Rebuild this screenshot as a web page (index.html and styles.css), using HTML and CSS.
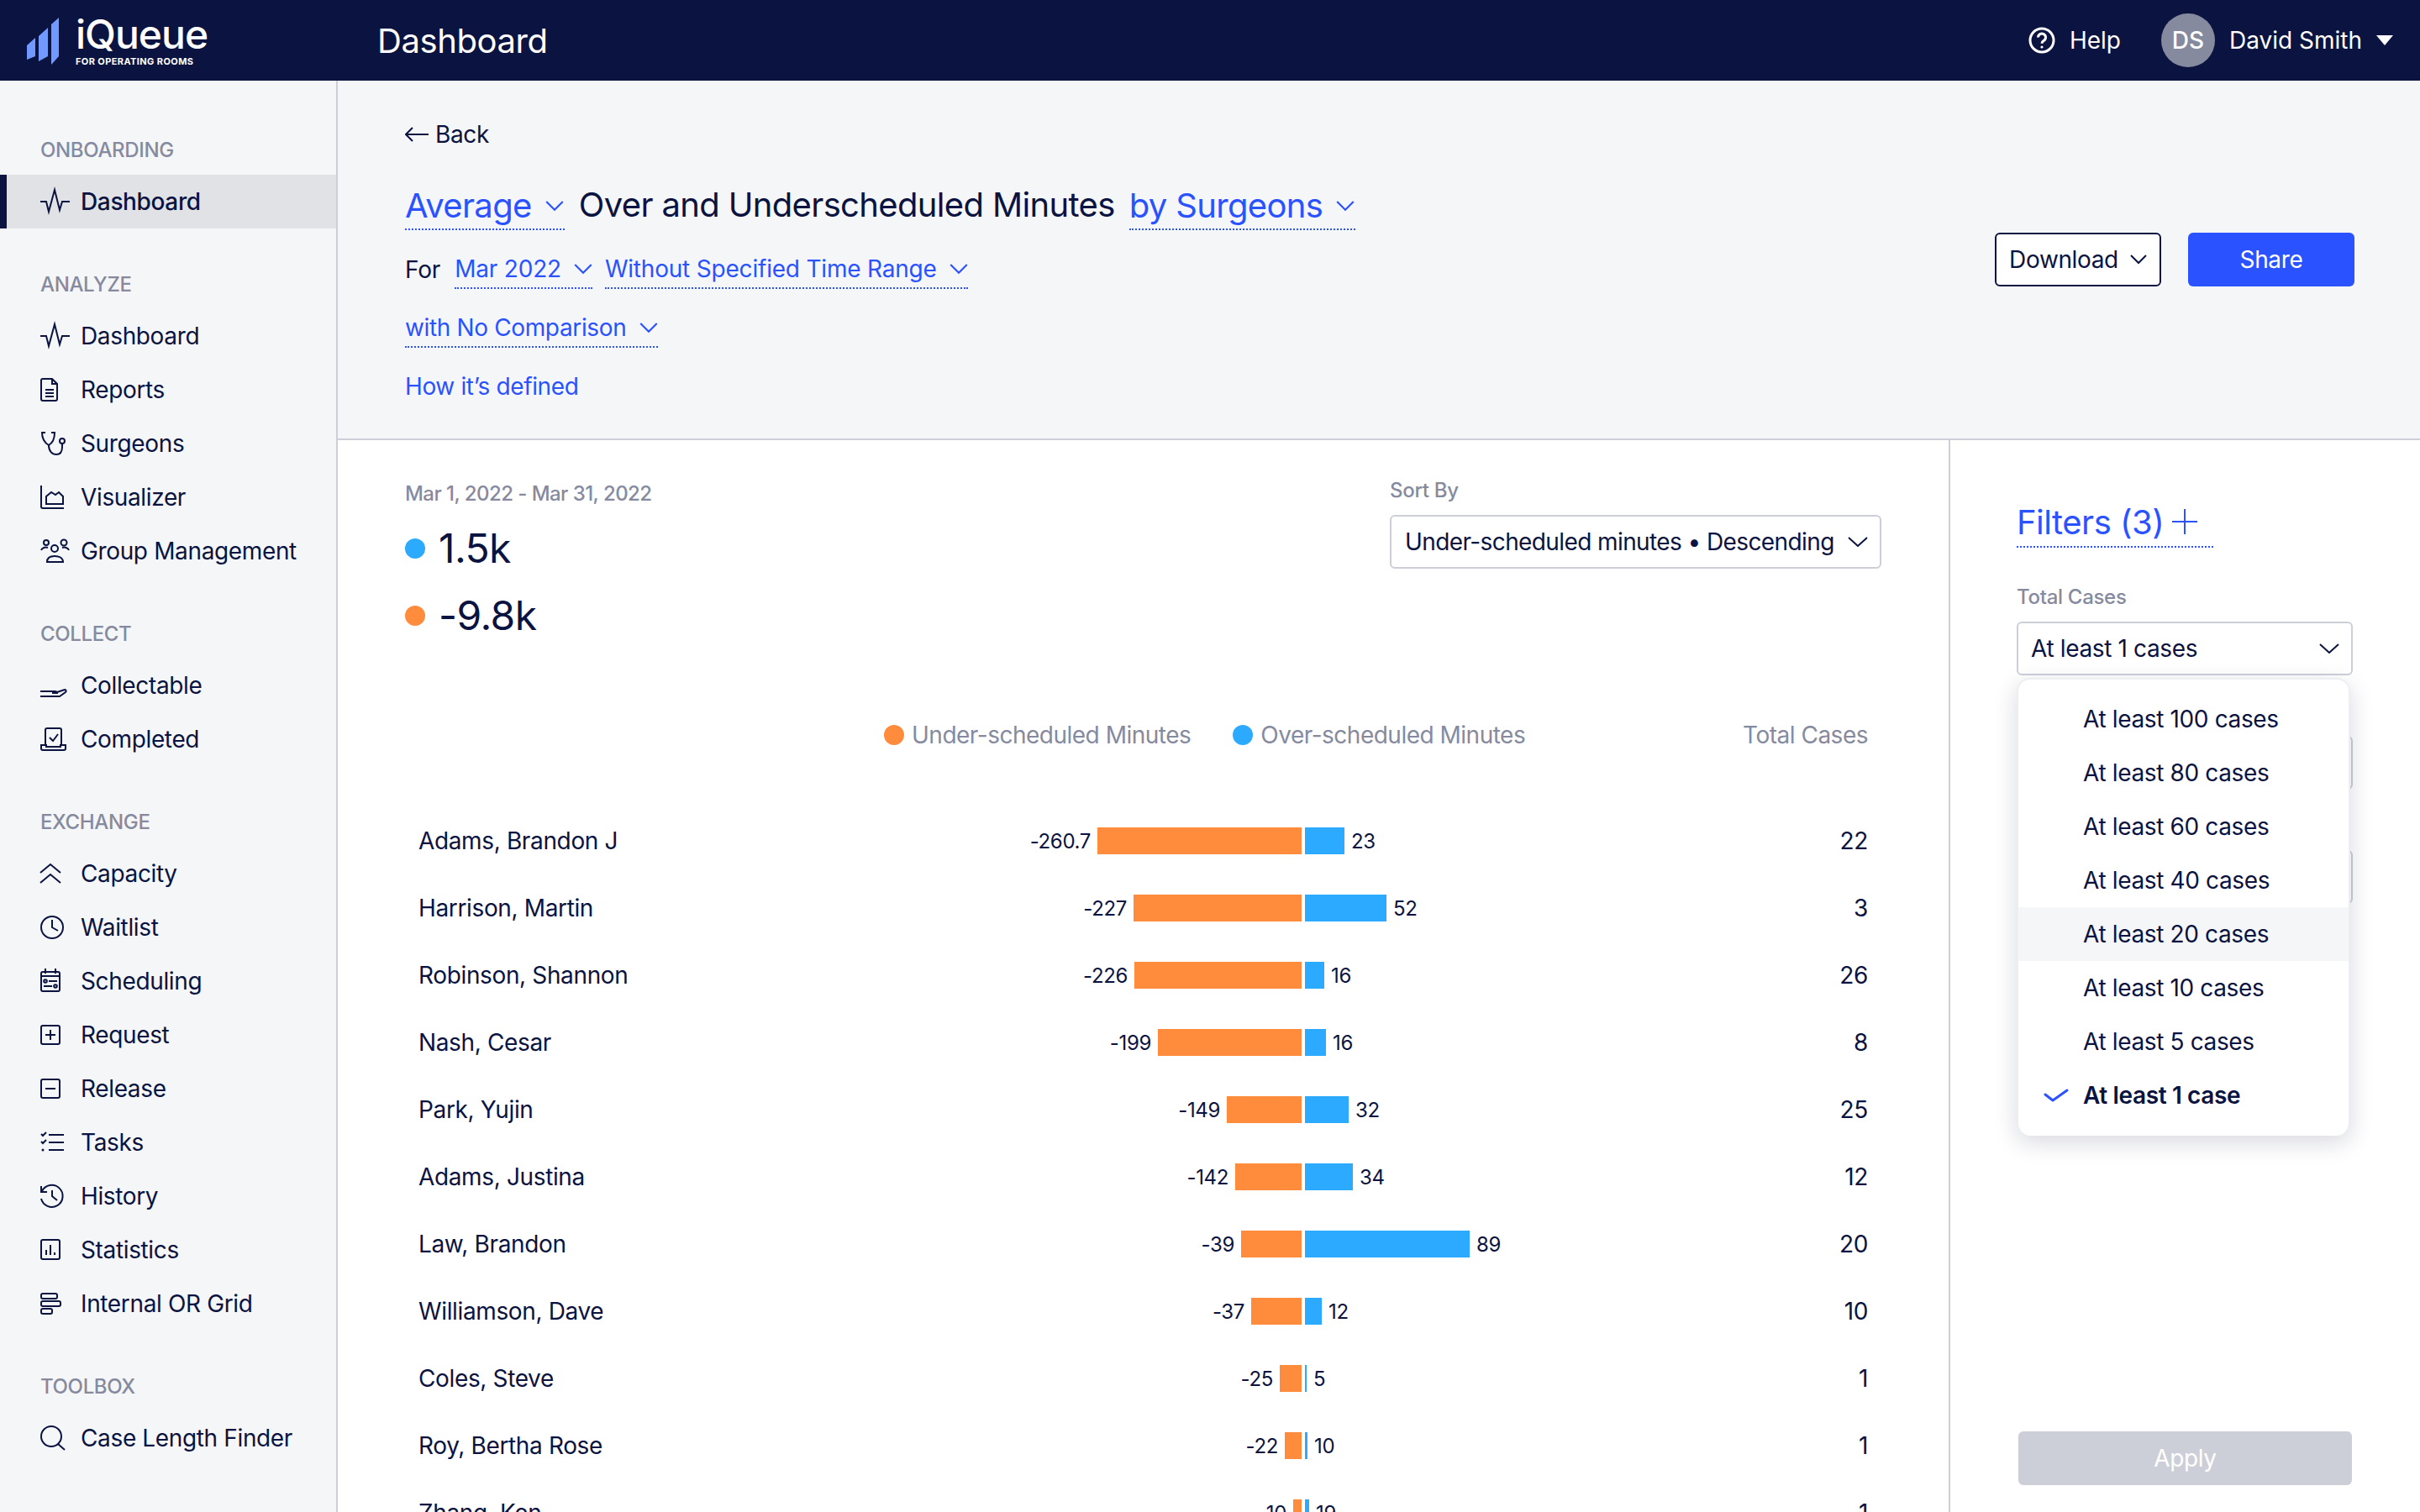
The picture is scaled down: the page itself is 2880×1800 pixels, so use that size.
FILE: index.html
```html
<!DOCTYPE html>
<html lang="en">
<head>
  <meta charset="UTF-8" />
  <title>iQueue Dashboard</title>
  <link rel="stylesheet" href="styles.css">
</head>
<body>

<header class="topbar">
  <div class="brand">
    <svg class="brand-mark" viewBox="0 0 38 56"><path d="M0 33l10-9v22l-10 4z" /><path d="M14 22l11-10v34l-11 6z" /><path d="M29 8l9-8v46l-9 10z" /></svg>
    <div class="brand-text">
      <div class="brand-name">iQueue</div>
      <div class="brand-sub">FOR OPERATING ROOMS</div>
    </div>
  </div>
  <div class="topbar-title">Dashboard</div>
  <div class="help">
    <svg class="help-icon" viewBox="0 0 32 32"><circle cx="16" cy="16" r="14" /><path d="M11.5 12.5a4.5 4.5 0 1 1 6.8 3.9c-1.5.9-2.3 1.6-2.3 3.3" /><circle class="dot" cx="16" cy="24" r="1.6" /></svg>
    <span>Help</span>
  </div>
  <div class="avatar">DS</div>
  <div class="username">David Smith</div>
  <div class="caret"></div>
</header>

<div class="layout">
  <aside class="sidebar">
    <div class="nav-label">ONBOARDING</div>
    <a class="nav-item active">
      <svg class="nav-icon" viewBox="0 0 40 40"><path d="M0 20h7l3 12 7-26 6 24 3-10h9" /></svg>
      <span>Dashboard</span>
    </a>

    <div class="nav-label">ANALYZE</div>
    <a class="nav-item">
      <svg class="nav-icon" viewBox="0 0 40 40"><path d="M0 20h7l3 12 7-26 6 24 3-10h9" /></svg>
      <span>Dashboard</span>
    </a>
    <a class="nav-item">
      <svg class="nav-icon" viewBox="0 0 40 40"><path d="M3 7h11l6 6v18a2 2 0 0 1-2 2H3a2 2 0 0 1-2-2V9a2 2 0 0 1 2-2z" /><path d="M14 7v6h6M6 20h10M6 24h10M6 28h10" /></svg>
      <span>Reports</span>
    </a>
    <a class="nav-item">
      <svg class="nav-icon" viewBox="0 0 40 40"><path d="M6 7H2c0 8 3 12 8 15 5-3 7-7 7-15h-4" /><path d="M10 22c0 7 4 11 9 11s7-4 7-9v-4" /><circle cx="26" cy="17" r="3" /></svg>
      <span>Surgeons</span>
    </a>
    <a class="nav-item">
      <svg class="nav-icon" viewBox="0 0 40 40"><path d="M1 6v25a2 2 0 0 0 2 2h25" /><path d="M7 28v-9l6-5 5 3 4-3 5 5v9z" /></svg>
      <span>Visualizer</span>
    </a>
    <a class="nav-item">
      <svg class="nav-icon" viewBox="0 0 40 40"><circle cx="7" cy="10" r="3" /><circle cx="28" cy="10" r="3.5" /><circle cx="17" cy="17" r="4" /><path d="M1 19c1-3 5-4 8-3M34 19c-1-3-5-4-8-3M8 33c0-5 4-7 9-7s10 2 10 7z" /></svg>
      <span>Group Management</span>
    </a>

    <div class="nav-label">COLLECT</div>
    <a class="nav-item">
      <svg class="nav-icon" viewBox="0 0 40 40"><path d="M0 27h17c2 0 3 1 3 2h-6M20 28l9-3c2 0 2 2 1 3l-7 5H0" /></svg>
      <span>Collectable</span>
    </a>
    <a class="nav-item">
      <svg class="nav-icon" viewBox="0 0 40 40"><path d="M6 27V9a2 2 0 0 1 2-2h15a2 2 0 0 1 2 2v18" /><path d="M1 27h6v2h17v-2h6v4a2 2 0 0 1-2 2H3a2 2 0 0 1-2-2z" /><path d="M11 18l4 4 6-8" /></svg>
      <span>Completed</span>
    </a>

    <div class="nav-label">EXCHANGE</div>
    <a class="nav-item">
      <svg class="nav-icon" viewBox="0 0 40 40"><path d="M0 19L12 9l12 10M0 31l12-10 12 10" /></svg>
      <span>Capacity</span>
    </a>
    <a class="nav-item">
      <svg class="nav-icon" viewBox="0 0 40 40"><circle cx="14" cy="20" r="13" /><path d="M14 11v9l7 4" /></svg>
      <span>Waitlist</span>
    </a>
    <a class="nav-item">
      <svg class="nav-icon" viewBox="0 0 40 40"><rect x="1" y="9" width="22" height="23" rx="2" /><path d="M6 5v6M18 5v6M1 14h22M10 20h10M4 26h10" /><circle cx="6" cy="20" r="1.8" /><circle cx="18" cy="26" r="1.8" /></svg>
      <span>Scheduling</span>
    </a>
    <a class="nav-item">
      <svg class="nav-icon" viewBox="0 0 40 40"><rect x="1" y="9" width="22" height="22" rx="2" /><path d="M12 14v12M6 20h12" /></svg>
      <span>Request</span>
    </a>
    <a class="nav-item">
      <svg class="nav-icon" viewBox="0 0 40 40"><rect x="1" y="9" width="22" height="22" rx="2" /><path d="M6 20h12" /></svg>
      <span>Release</span>
    </a>
    <a class="nav-item">
      <svg class="nav-icon" viewBox="0 0 40 40"><path d="M10 11h18M10 20h18M10 29h18M1 10l2 2 4-4M1 19l2 2 4-4" /><circle class="dot" cx="3" cy="29" r="1.5" /></svg>
      <span>Tasks</span>
    </a>
    <a class="nav-item">
      <svg class="nav-icon" viewBox="0 0 40 40"><path d="M2 14a13 13 0 1 1-1 9" /><path d="M1 8v7h7M14 13v7l6 5" /></svg>
      <span>History</span>
    </a>
    <a class="nav-item">
      <svg class="nav-icon" viewBox="0 0 40 40"><rect x="1" y="8" width="22" height="23" rx="2" /><path d="M7 26v-6M12 26V14M17 26v-3" /></svg>
      <span>Statistics</span>
    </a>
    <a class="nav-item">
      <svg class="nav-icon" viewBox="0 0 40 40"><rect x="1" y="8" width="19" height="6" rx="2" /><rect x="1" y="17" width="23" height="6" rx="2" /><rect x="1" y="26" width="13" height="6" rx="2" /></svg>
      <span>Internal OR Grid</span>
    </a>

    <div class="nav-label">TOOLBOX</div>
    <a class="nav-item">
      <svg class="nav-icon" viewBox="0 0 40 40"><circle cx="13" cy="18" r="12" /><path d="M21 27l8 7" /></svg>
      <span>Case Length Finder</span>
    </a>
  </aside>

  <main class="main">
    <section class="summary">
      <div class="summary-left">
        <div class="back">
          <svg class="back-arrow" viewBox="0 0 28 20"><path d="M9 2L1 10l8 8M1 10h27" /></svg>
          <span>Back</span>
        </div>
        <div class="title-row">
          <span class="pick">Average <svg class="chev" viewBox="0 0 20 12"><path d="M1 1l9 9 9-9" /></svg></span>
          <span class="title-text">Over and Underscheduled Minutes</span>
          <span class="pick">by Surgeons <svg class="chev" viewBox="0 0 20 12"><path d="M1 1l9 9 9-9" /></svg></span>
        </div>
        <div class="for-row">
          <span class="for-label">For</span>
          <span class="pick">Mar 2022 <svg class="chev" viewBox="0 0 20 12"><path d="M1 1l9 9 9-9" /></svg></span>
          <span class="pick">Without Specified Time Range <svg class="chev" viewBox="0 0 20 12"><path d="M1 1l9 9 9-9" /></svg></span>
        </div>
        <div class="compare-row">
          <span class="pick">with No Comparison <svg class="chev" viewBox="0 0 20 12"><path d="M1 1l9 9 9-9" /></svg></span>
        </div>
        <div class="defined">How it’s defined</div>
      </div>
      <div class="summary-actions">
        <button class="btn-download">Download <svg class="chev" viewBox="0 0 20 12"><path d="M1 1l9 9 9-9" /></svg></button>
        <button class="btn-share">Share</button>
      </div>
    </section>

    <div class="content">
      <section class="chart">
        <div class="chart-head">
          <div>
            <div class="date-range">Mar 1, 2022 - Mar 31, 2022</div>
            <div class="big-stat"><i class="dot-blue"></i>1.5k</div>
            <div class="big-stat"><i class="dot-orange"></i>-9.8k</div>
          </div>
          <div class="sort">
            <div class="field-label">Sort By</div>
            <div class="select sort-select">Under-scheduled minutes • Descending <svg class="chev" viewBox="0 0 24 12"><path d="M1 1l11 10L23 1" /></svg></div>
          </div>
        </div>

        <div class="legend">
          <span class="legend-item under"><i class="dot-orange"></i>Under-scheduled Minutes</span>
          <span class="legend-item over"><i class="dot-blue"></i>Over-scheduled Minutes</span>
          <span class="legend-total">Total Cases</span>
        </div>

        <div class="rows">
          <div class="row"><span>Adams, Brandon J</span><div class="neg"><span>-260.7</span><i style="width:243px"></i></div><div class="pos"><i style="width:47px"></i><span>23</span></div><span class="total">22</span></div>
          <div class="row"><span>Harrison, Martin</span><div class="neg"><span>-227</span><i style="width:200px"></i></div><div class="pos"><i style="width:97px"></i><span>52</span></div><span class="total">3</span></div>
          <div class="row"><span>Robinson, Shannon</span><div class="neg"><span>-226</span><i style="width:199px"></i></div><div class="pos"><i style="width:23px"></i><span>16</span></div><span class="total">26</span></div>
          <div class="row"><span>Nash, Cesar</span><div class="neg"><span>-199</span><i style="width:171px"></i></div><div class="pos"><i style="width:25px"></i><span>16</span></div><span class="total">8</span></div>
          <div class="row"><span>Park, Yujin</span><div class="neg"><span>-149</span><i style="width:89px"></i></div><div class="pos"><i style="width:52px"></i><span>32</span></div><span class="total">25</span></div>
          <div class="row"><span>Adams, Justina</span><div class="neg"><span>-142</span><i style="width:79px"></i></div><div class="pos"><i style="width:57px"></i><span>34</span></div><span class="total">12</span></div>
          <div class="row"><span>Law, Brandon</span><div class="neg"><span>-39</span><i style="width:72px"></i></div><div class="pos"><i style="width:196px"></i><span>89</span></div><span class="total">20</span></div>
          <div class="row"><span>Williamson, Dave</span><div class="neg"><span>-37</span><i style="width:60px"></i></div><div class="pos"><i style="width:20px"></i><span>12</span></div><span class="total">10</span></div>
          <div class="row"><span>Coles, Steve</span><div class="neg"><span>-25</span><i style="width:26px"></i></div><div class="pos"><i style="width:2px"></i><span>5</span></div><span class="total">1</span></div>
          <div class="row"><span>Roy, Bertha Rose</span><div class="neg"><span>-22</span><i style="width:20px"></i></div><div class="pos"><i style="width:3px"></i><span>10</span></div><span class="total">1</span></div>
          <div class="row"><span>Zhang, Ken</span><div class="neg"><span>-10</span><i style="width:10px"></i></div><div class="pos"><i style="width:5px"></i><span>19</span></div><span class="total">1</span></div>
        </div>
      </section>

      <aside class="filters">
        <div class="filters-title"><span>Filters (3)</span><svg class="plus" viewBox="0 0 30 30"><path d="M15 0v30M0 15h30" /></svg></div>
        <div class="filter-field">
          <div class="field-label">Total Cases</div>
          <div class="select filter-select">At least 1 cases <svg class="chev" viewBox="0 0 24 12"><path d="M1 1l11 10L23 1" /></svg></div>
          <ul class="menu">
            <li>At least 100 cases</li>
            <li>At least 80 cases</li>
            <li>At least 60 cases</li>
            <li>At least 40 cases</li>
            <li class="hover">At least 20 cases</li>
            <li>At least 10 cases</li>
            <li>At least 5 cases</li>
            <li class="selected"><svg class="check" viewBox="0 0 30 16"><path d="M2 7l9 7L28 2" /></svg>At least 1 case</li>
          </ul>
        </div>
        <div class="select filter-select hidden-field"></div>
        <div class="select filter-select hidden-field"></div>
        <button class="btn-apply">Apply</button>
      </aside>
    </div>
  </main>
</div>

</body>
</html>
```

FILE: styles.css
```css
* {
  box-sizing: border-box;
}
html, body {
  margin: 0;
  height: 1800px;
  overflow: hidden;
}
body {
  font-family: Inter, "Liberation Sans", sans-serif;
  font-size: 28px;
  letter-spacing: -.36px;
  color: #0b1340;
  background: #fff;
}
i {
  display: block;
}

/* top bar */
.topbar {
  height: 96px;
  background: #0b1340;
  color: #fff;
  display: flex;
  align-items: center;
  letter-spacing: 0;
}
.brand {
  width: 449px;
  padding-left: 32px;
  display: flex;
  align-items: center;
}
.brand-mark {
  width: 38px;
  height: 56px;
  fill: #7199ff;
  margin-top: 1px;
}
.brand-text {
  margin-left: 20px;
}
.brand-name {
  font-size: 48px;
  line-height: 50px;
  font-weight: 500;
  letter-spacing: -1px;
}
.brand-sub {
  font-size: 11px;
  line-height: 14px;
  font-weight: 700;
  letter-spacing: .4px;
}
.topbar-title {
  font-size: 40px;
  letter-spacing: -.4px;
  flex: 1;
}
.help {
  display: flex;
  align-items: center;
  gap: 17px;
  margin-right: 48px;
}
.help-icon {
  width: 32px;
  height: 32px;
  fill: none;
  stroke: #fff;
  stroke-width: 3;
}
.help-icon .dot {
  fill: #fff;
  stroke: none;
}
.avatar {
  width: 64px;
  height: 64px;
  border-radius: 50%;
  background: #868a9f;
  display: flex;
  align-items: center;
  justify-content: center;
  font-weight: 500;
}
.username {
  margin-left: 17px;
}
.caret {
  margin: 0 32px 0 17px;
  border-left: 10px solid transparent;
  border-right: 10px solid transparent;
  border-top: 12px solid #fff;
}

.layout {
  display: flex;
  height: 1704px;
}

/* sidebar */
.sidebar {
  width: 402px;
  flex: none;
  background: #f5f6f8;
  border-right: 2px solid #cdcfd8;
  padding-top: 65px;
}
.nav-label {
  height: 32px;
  line-height: 35px;
  margin: 49px 0 15px 48px;
  font-size: 24px;
  font-weight: 500;
  color: #868a9f;
}
.nav-label:first-child {
  margin-top: 0;
}
.nav-item {
  height: 64px;
  display: flex;
  align-items: center;
  gap: 8px;
  padding-left: 48px;
}
.nav-item.active {
  background: #e1e2e6;
  border-left: 8px solid #0b1340;
  padding-left: 40px;
  font-weight: 500;
}
.nav-icon {
  width: 40px;
  height: 40px;
  flex: none;
  fill: none;
  stroke: #0b1340;
  stroke-width: 2;
  overflow: visible;
}
.nav-icon .dot {
  fill: #0b1340;
  stroke: none;
}

/* summary band */
.main {
  flex: 1;
  min-width: 0;
}
.summary {
  height: 428px;
  background: #f5f6f8;
  border-bottom: 2px solid #cdcfd8;
  padding: 0 78px 0 80px;
  display: flex;
  justify-content: space-between;
  align-items: center;
}
.summary-left {
  align-self: flex-start;
}
.back {
  margin-top: 44px;
  height: 40px;
  display: flex;
  align-items: center;
  gap: 8px;
}
.back-arrow {
  width: 28px;
  height: 20px;
  fill: none;
  stroke: #0b1340;
  stroke-width: 2;
}
.pick {
  display: inline-flex;
  align-items: center;
  color: #2a52ff;
  border-bottom: 2px dotted #2a52ff;
}
.chev {
  flex: none;
  fill: none;
  stroke: currentColor;
  stroke-width: 2;
}
.pick .chev {
  width: 22px;
  height: 13px;
}
.title-row {
  margin-top: 38px;
  display: flex;
  align-items: flex-start;
  gap: 17px;
  font-size: 40px;
  letter-spacing: -.65px;
  line-height: 52px;
}
.title-row .pick {
  gap: 16px;
  height: 56px;
  padding-right: 1px;
}
.for-row {
  margin-top: 24px;
  display: flex;
  align-items: center;
  gap: 17px;
  height: 46px;
  letter-spacing: -.2px;
}
.for-row .pick {
  gap: 15px;
  height: 46px;
}
.for-row .pick:last-child {
  margin-left: -2px;
}
.compare-row {
  margin-top: 24px;
}
.compare-row .pick {
  gap: 16px;
  height: 46px;
}
.defined {
  margin-top: 26px;
  color: #2a52ff;
  line-height: 40px;
}
.summary-actions {
  display: flex;
  gap: 32px;
}
button {
  font: inherit;
  letter-spacing: inherit;
}
.btn-download {
  width: 198px;
  height: 64px;
  border: 2px solid #0b1340;
  border-radius: 6px;
  background: #fff;
  color: #0b1340;
  padding: 0;
  display: flex;
  align-items: center;
  justify-content: center;
  gap: 14px;
}
.btn-download .chev {
  width: 20px;
  height: 12px;
}
.btn-share {
  width: 198px;
  height: 64px;
  border: 0;
  border-radius: 6px;
  background: #2a52ff;
  color: #fff;
}

/* chart */
.content {
  display: flex;
  height: 1276px;
}
.chart {
  width: 1919px;
  flex: none;
  border-right: 2px solid #cdcfd8;
  padding: 0 80px;
  overflow: hidden;
}
.chart-head {
  display: flex;
  justify-content: space-between;
}
.date-range {
  margin: 49px 0 10px;
  font-size: 24px;
  letter-spacing: -.55px;
  line-height: 30px;
  font-weight: 500;
  color: #868a9f;
}
.big-stat {
  display: flex;
  align-items: center;
  gap: 16px;
  font-size: 48px;
  letter-spacing: -.6px;
  line-height: 80px;
}
.dot-blue, .dot-orange {
  width: 24px;
  height: 24px;
  border-radius: 50%;
  background: #2baaff;
}
.dot-orange {
  background: #ff8b3d;
}
.sort {
  width: 585px;
  margin-top: 45px;
}
.field-label {
  font-size: 24px;
  letter-spacing: -.3px;
  line-height: 30px;
  font-weight: 500;
  color: #868a9f;
}
.select {
  border: 2px solid #cdcfd8;
  border-radius: 6px;
  background: #fff;
  display: flex;
  align-items: center;
  justify-content: space-between;
  white-space: nowrap;
}
.select .chev {
  width: 24px;
  height: 12px;
}
.sort-select {
  height: 64px;
  margin-top: 14px;
  padding: 0 14px 0 16px;
  letter-spacing: -.6px;
}
.legend {
  margin-top: 82px;
  display: flex;
  align-items: center;
  padding-left: 570px;
  padding-right: 16px;
  height: 40px;
  color: #868a9f;
  letter-spacing: -.5px;
}
.legend-item {
  display: flex;
  align-items: center;
  gap: 9px;
}
.legend-item.over {
  margin-left: 50px;
}
.legend-total {
  margin-left: auto;
}
.rows {
  margin-top: 66px;
  padding: 0 16px;
}
.row {
  height: 80px;
  display: grid;
  grid-template-columns: 500px 551px 1fr 100px;
  align-items: center;
}
.neg, .pos {
  display: flex;
  align-items: center;
  gap: 8px;
  font-size: 24px;
}
.neg {
  justify-content: flex-end;
}
.pos {
  margin-left: 4px;
}
.neg i, .pos i {
  height: 32px;
  background: #ff8b3d;
}
.pos i {
  background: #2baaff;
}
.total {
  text-align: right;
}

/* filters */
.filters {
  flex: 1;
  padding: 0 80px 32px 79px;
  display: flex;
  flex-direction: column;
  position: relative;
}
.filters-title {
  margin-top: 64px;
  width: 234px;
  height: 64px;
  padding-top: 4px;
  display: flex;
  align-items: center;
  gap: 10px;
  color: #2a52ff;
  font-size: 40px;
  letter-spacing: -.5px;
  border-bottom: 2px dotted #2a52ff;
}
.plus {
  width: 30px;
  height: 30px;
  fill: none;
  stroke: #2a52ff;
  stroke-width: 2;
}
.filter-field {
  position: relative;
  margin-top: 44px;
}
.filter-select {
  height: 64px;
  margin-top: 14px;
  padding: 0 14px 0 15px;
}
.hidden-field {
  margin-top: 72px;
}
.menu {
  position: absolute;
  top: 111px;
  left: 0;
  width: 397px;
  margin: 0;
  padding: 15px 0 16px;
  list-style: none;
  background: #fff;
  border: 2px solid #eceef1;
  border-bottom: 0;
  border-radius: 16px;
  box-shadow: 0 8px 28px rgba(11, 19, 64, .16);
  z-index: 5;
}
.menu li {
  height: 64px;
  padding-left: 77px;
  display: flex;
  align-items: center;
  position: relative;
}
.menu .hover {
  background: #f5f6f8;
}
.menu .selected {
  font-weight: 600;
}
.check {
  position: absolute;
  left: 30px;
  width: 30px;
  height: 16px;
  fill: none;
  stroke: #2a52ff;
  stroke-width: 3;
  stroke-linecap: round;
  stroke-linejoin: round;
}
.btn-apply {
  margin-top: auto;
  margin-left: 2px;
  margin-right: 1px;
  height: 64px;
  border: 0;
  border-radius: 6px;
  background: #cdcfd8;
  color: #fff;
}
```
